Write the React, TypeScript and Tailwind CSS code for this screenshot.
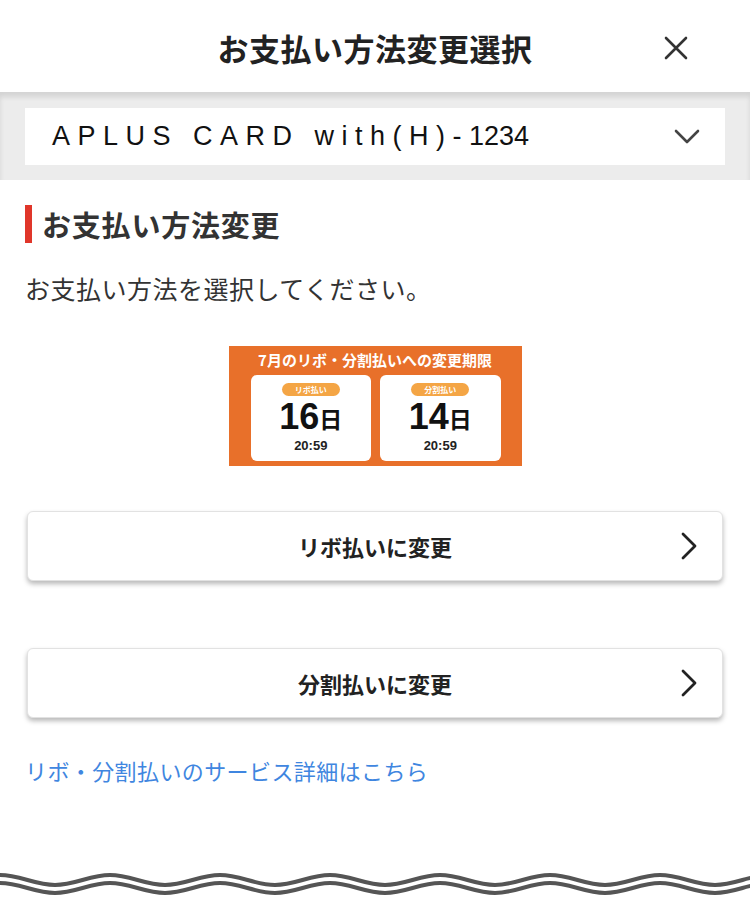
import React from 'react';

const jp = '"Noto Sans CJK JP", "Noto Sans", sans-serif';
const latin = '"Liberation Sans", Arial, sans-serif';

const wavePath = (top: number, amp: number, period: number, width: number) => {
  const half = period / 2;
  let d = `M0,${top}`;
  let y = top;
  for (let x = 0; x < width; x += half) {
    const ny = y === top ? top + amp : top;
    d += ` C${x + half * 0.36},${y} ${x + half * 0.64},${ny} ${x + half},${ny}`;
    y = ny;
  }
  return d;
};

const CloseIcon = () => (
  <svg width="26" height="26" viewBox="0 0 26 26" fill="none" stroke="#333" strokeWidth="2.6" strokeLinecap="round">
    <path d="M3 3 L23 23 M23 3 L3 23" />
  </svg>
);

const ChevronDown = () => (
  <svg width="28" height="16" viewBox="0 0 28 16" fill="none" stroke="#444" strokeWidth="2.6" strokeLinecap="round" strokeLinejoin="round">
    <path d="M3 2 L14 13 L25 2" />
  </svg>
);

const ChevronRight = () => (
  <svg width="20" height="28" viewBox="0 0 20 28" fill="none" stroke="#222" strokeWidth="2.8" strokeLinecap="round" strokeLinejoin="round">
    <path d="M4 2 L16 14 L4 26" />
  </svg>
);

const DeadlineBox = ({ label, day }: { label: string; day: string }) => (
  <div className="flex flex-col items-center bg-white rounded-[6px] h-[86px] pt-[8px]">
    <div className="h-[13px] w-[58px] rounded-full bg-[#f4a545] text-white text-[8px] leading-[13px] text-center font-bold">
      {label}
    </div>
    <div className="flex items-end h-[30px] mt-[6px]">
      <span className="text-[36px] leading-[30px] font-bold text-[#111]" style={{ fontFamily: latin }}>
        {day}
      </span>
      <span className="text-[23px] leading-[28px] font-bold text-[#111]">日</span>
    </div>
    <div className="text-[13px] font-bold text-[#222] mt-[7px] leading-[13px]" style={{ fontFamily: latin }}>
      20:59
    </div>
  </div>
);

const ActionButton = ({ label }: { label: string }) => (
  <button className="grid grid-cols-[60px_1fr_60px] items-center w-full h-[70px] bg-white rounded-[6px] border border-[#e2e2e2] shadow-[0_3px_5px_rgba(0,0,0,0.28)]">
    <span />
    <span className="text-[22px] font-bold text-[#222] text-center">{label}</span>
    <span className="flex justify-start pl-[17px]">
      <ChevronRight />
    </span>
  </button>
);

export default function App() {
  return (
    <div className="w-[750px] h-[905px] bg-white overflow-hidden" style={{ fontFamily: jp }}>
      <header className="grid grid-cols-[100px_1fr_100px] items-center h-[92px] pt-[4px]">
        <span />
        <h1 className="text-center text-[31px] font-bold text-[#222] tracking-[0.5px]">お支払い方法変更選択</h1>
        <button className="flex justify-start pl-[13px]">
          <CloseIcon />
        </button>
      </header>

      <div className="bg-[#ececec] px-[25px] pt-[16px] pb-[15px] shadow-[inset_0_5px_5px_rgba(0,0,0,0.10)]">
        <div className="flex items-center justify-between h-[57px] bg-white pl-[27px] pr-[24px]">
          <span className="text-[27px] text-[#111]" style={{ fontFamily: latin }}>
            <span className="tracking-[7.5px]">APLUS CARD with(H)-</span>
            <span>1234</span>
          </span>
          <ChevronDown />
        </div>
      </div>

      <main className="px-[25px]">
        <h2 className="mt-[25px] h-[38px] border-l-[7px] border-[#e0362a] pl-[10px] text-[29px] leading-[38px] font-bold text-[#333] tracking-[0.8px]">
          お支払い方法変更
        </h2>
        <p className="mt-[27px] text-[25px] leading-[36px] text-[#333] tracking-[0.5px]">お支払い方法を選択してください。</p>

        <div className="mx-auto mt-[40px] w-[293px] h-[120px] bg-[#e8702a] pt-[4px] pl-[22px] pr-[21px]">
          <div className="text-white text-[15px] font-bold leading-[20px] text-center -ml-[22px] -mr-[21px]">
            7月のリボ・分割払いへの変更期限
          </div>
          <div className="grid grid-cols-2 gap-[9px] mt-[5px]">
            <DeadlineBox label="リボ払い" day="16" />
            <DeadlineBox label="分割払い" day="14" />
          </div>
        </div>

        <div className="mt-[45px] px-[2px] flex flex-col gap-[67px]">
          <ActionButton label="リボ払いに変更" />
          <ActionButton label="分割払いに変更" />
        </div>

        <a className="block mt-[37px] text-[22px] leading-[30px] text-[#3f86e0] tracking-[0.4px]">リボ・分割払いのサービス詳細はこちら</a>
      </main>

      <svg className="block mt-[86px]" width="750" height="26" viewBox="0 0 750 26" fill="none" stroke="#555" strokeWidth="4">
        <path d={wavePath(4, 10, 110, 760)} />
        <path d={wavePath(12, 10, 110, 760)} />
      </svg>
    </div>
  );
}
